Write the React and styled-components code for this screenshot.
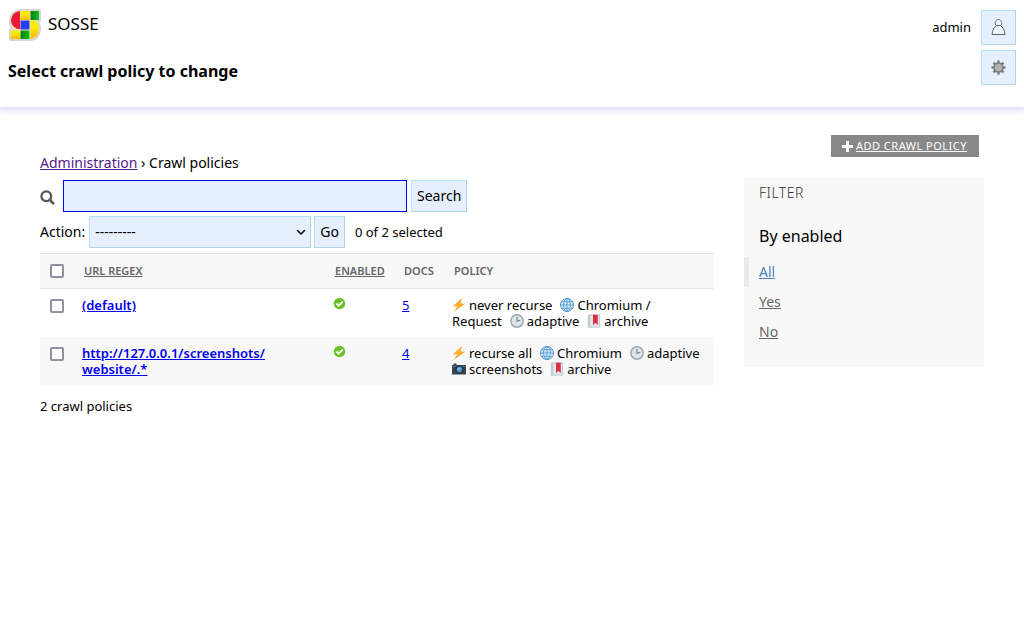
import React, { useState } from "react";
import styled, { createGlobalStyle } from "styled-components";

const GlobalStyle = createGlobalStyle`
  *, *::before, *::after { box-sizing: border-box; }
  body {
    margin: 0;
    background: #fff;
    color: #000;
    font: 14px/20px "Noto Sans", "Open Sans", sans-serif;
  }
  button, input, select { font: inherit; color: inherit; }
`;

const Header = styled.header`
  display: flex;
  justify-content: space-between;
  min-height: 107px;
  padding: 8px;
  box-shadow: 0 2px 6px 2px #dfe1f5;
`;
const Brand = styled.a`
  display: flex;
  align-items: center;
  gap: 6px;
  height: 32px;
  font-size: 17px;
  color: #000;
  text-decoration: none;
  svg { flex: none; margin-top: 2px; }
`;
const Title = styled.h1`
  margin: 19px 0 0;
  font-size: 16px;
  line-height: 24px;
  font-weight: 700;
`;
const UserArea = styled.div`
  display: flex;
  gap: 10px;
  padding-top: 2px;
  font-size: 13px;
  line-height: 34px;
`;
const IconStack = styled.div`
  display: flex;
  flex-direction: column;
  gap: 5px;
`;
const Button = styled.button`
  height: 32px;
  padding: 0 5px;
  border: 1px solid;
  border-color: #b4e3f8 #b1d4e8 #b1d4e8 #b4e3f8;
  border-radius: 0;
  background: #e6effe;
`;
const IconButton = styled(Button)`
  display: flex;
  align-items: center;
  justify-content: center;
  width: 35px;
  height: 35px;
`;

const Main = styled.main`
  display: grid;
  grid-template-columns: minmax(0, 1fr) 240px;
  gap: 30px;
  padding: 28px 40px;
`;
const Content = styled.section`padding-top: 18px;`;
const Breadcrumbs = styled.nav`
  margin-bottom: 7px;
  a { color: #551a8b; }
`;
const Toolbar = styled.form`
  display: flex;
  align-items: center;
  gap: ${(p) => (p.$last ? 3 : 4)}px;
  margin-bottom: ${(p) => (p.$last ? 5 : 4)}px;
`;
const ActionLabel = styled.label`padding-right: 1px;`;
const SearchLabel = styled.label`
  display: flex;
  width: 19px;
  padding-top: 3px;
`;
const SearchInput = styled.input`
  width: 344px;
  height: 32px;
  padding: 0 5px;
  border: 1px solid #0000f5;
  background: #e6effe;
  outline: none;
`;
const SelectWrap = styled.span`
  position: relative;
  display: flex;
  svg { position: absolute; right: 5px; top: 11px; pointer-events: none; }
`;
const Select = styled.select`
  appearance: none;
  width: 222px;
  height: 32px;
  padding: 0 20px 0 5px;
  border: 1px solid;
  border-color: #b4e3f8 #b1d4e8 #b1d4e8 #b4e3f8;
  border-radius: 0;
  background: #e6effe;
`;
const Count = styled.span`
  margin-left: 7px;
  font-size: 13px;
`;

const Table = styled.table`
  width: 100%;
  border-collapse: separate;
  border-spacing: 0;
  table-layout: fixed;
  font-size: 13px;
  line-height: 16px;
`;
const HeadCell = styled.th`
  width: ${(p) => p.$width || "auto"};
  height: 36px;
  padding: 0 10px;
  border: solid #e6e6e6;
  border-width: 1px 0;
  background: #f8f8f8;
  color: #666;
  font-size: 11px;
  font-weight: 600;
  text-align: left;
  text-transform: uppercase;
  a { color: inherit; }
`;
const Row = styled.tr`
  background: ${(p) => (p.$shaded ? "#f8f8f8" : "#fff")};
`;
const Cell = styled.td`
  height: 48px;
  padding: 8px;
  vertical-align: top;
  font-weight: ${(p) => (p.$strong ? 600 : 400)};
  a { color: #0000ee; }
  > svg { display: block; }
`;
const CheckCell = styled(Cell)`padding: 10px;`;
const Checkbox = styled.input`
  appearance: none;
  display: block;
  width: 14px;
  height: 14px;
  margin: 0;
  border: 2px solid #8f8f9d;
  border-radius: 2px;
  background: #fff;
  &:checked { background: #0060df; }
`;
const PolicyLine = styled.span`
  display: flex;
  gap: 8px;
  white-space: nowrap;
`;
const PolicyItem = styled.span`
  display: flex;
  align-items: center;
  gap: 3px;
`;
const Summary = styled.p`
  margin: 11px 0;
  font-size: 13px;
`;

const Side = styled.aside`
  display: flex;
  flex-direction: column;
  gap: 21px;
`;
const AddLink = styled.a`
  display: flex;
  align-items: center;
  align-self: flex-end;
  gap: 3px;
  height: 22px;
  margin-right: 5px;
  padding: 0 12px 0 11px;
  background: #888;
  color: #fff;
  font-size: 11px;
  letter-spacing: 0.5px;
  text-transform: uppercase;
  white-space: nowrap;
`;
const Filter = styled.nav`
  padding: 5px 15px 20px;
  background: #f8f8f8;
`;
const FilterTitle = styled.h2`
  margin: 0 0 22px;
  color: #333;
  font-size: 14px;
  font-weight: 300;
  letter-spacing: 0.5px;
  text-transform: uppercase;
`;
const FilterGroup = styled.h3`
  margin: 0 0 10px;
  font-size: 16px;
  line-height: 22px;
  font-weight: 400;
`;
const FilterList = styled.ul`
  margin: 0 -15px;
  padding: 0;
  list-style: none;
`;
const FilterItem = styled.li`
  height: 30px;
  padding-left: 10px;
  border-left: 5px solid ${(p) => (p.$selected ? "#eaeaea" : "transparent")};
  line-height: 30px;
  a { color: ${(p) => (p.$selected ? "#4f7fbd" : "#666")}; }
`;

const Logo = () => (
  <svg width="34" height="34" viewBox="0 0 34 34" aria-hidden="true">
    <defs>
      <linearGradient id="ly" x2="0" y2="1"><stop offset=".4" stopColor="#f8ea00" /><stop offset="1" stopColor="#ffb000" /></linearGradient>
      <linearGradient id="lg" x2="1" y2="0"><stop stopColor="#0a7a16" /><stop offset="1" stopColor="#0bc313" /></linearGradient>
    </defs>
    <path d="M12 3H31V12H27Q31 15 31 21 30 31 22 31H3V22H7Q3 19 3 13 4 4 12 3Z" fill="#d5d5d5" stroke="#d5d5d5" strokeWidth="4" strokeLinejoin="round" />
    <path d="M12 3H31V12H27Q31 15 31 21 30 31 22 31H3V22H7Q3 19 3 13 4 4 12 3Z" fill="#fbe9b4" />
    <path d="M12 3V21H9Q3 18 3 12 4 4 12 3Z" fill="#e91c35" />
    <path d="M12.500 3h9v9h-9z" fill="url(#ly)" />
    <path d="M22.500 3h8.500v9h-8.500z" fill="url(#lg)" />
    <path d="M12.500 12.500h9v9h-9z" fill="#263cf5" />
    <path d="M22.500 12.500h4.500Q31 16 31 21 30 30 22.500 31Z" fill="url(#ly)" />
    <path d="M3 22.500h9v8.500H3z" fill="url(#ly)" />
    <path d="M12.500 22.500h9v8.500h-9z" fill="url(#lg)" />
  </svg>
);
const UserIcon = () => (
  <svg width="15" height="17" viewBox="0 0 15 17" fill="#f2f6fd" stroke="#59636d" aria-hidden="true">
    <path d="M5.500 6.500C3.900 5.500 3.900 3.700 4.700 2.500 6-.1 9-.1 10.300 2.500c.8 1.200.8 3-.8 4 2.500 1.500 4 4.500 4.500 9h-13c.5-4.500 2-7.500 4.500-9Z" />
    <path d="M5.500 6.500h4" />
  </svg>
);
const GearIcon = () => (
  <svg width="15" height="15" viewBox="0 0 16 16" stroke="#7c7c7c" aria-hidden="true">
    {[0, 45, 90, 135].map((a) => (
      <path key={a} d="M8 .5v15" strokeWidth="2.600" transform={`rotate(${a} 8 8)`} />
    ))}
    <circle cx="8" cy="8" r="4.800" fill="#b2b2b2" strokeWidth="1.600" />
  </svg>
);
const SearchIcon = () => (
  <svg width="15" height="15" viewBox="0 0 15 15" fill="none" stroke="#555" aria-hidden="true">
    <circle cx="6.300" cy="6.300" r="4.900" strokeWidth="2.200" />
    <path d="m9.800 9.800 3.400 3.600" strokeWidth="2.600" strokeLinecap="round" />
  </svg>
);
const Chevron = () => (
  <svg width="10" height="10" viewBox="0 0 10 10" fill="none" stroke="#111" strokeWidth="1.600" strokeLinecap="round" strokeLinejoin="round" aria-hidden="true">
    <path d="m1.500 3.500 3.500 3.500 3.500-3.500" />
  </svg>
);
const YesIcon = () => (
  <svg width="13" height="13" viewBox="0 0 13 13" role="img" aria-label="True">
    <circle cx="6.500" cy="6.500" r="5.700" fill="#70bf2b" />
    <path d="m3.500 6.500 2.200 2.200 4-4" fill="none" stroke="#fff" strokeWidth="1.800" />
  </svg>
);
const PlusIcon = () => (
  <svg width="11" height="11" viewBox="0 0 11 11" stroke="#fff" strokeWidth="3" aria-hidden="true">
    <path d="M5.500 0v11M0 5.500h11" />
  </svg>
);

const glyphs = {
  bolt: <path d="M10 0 .8 8.300l4.500.2L1.800 14 13.300 5.700l-4.700-.2Z" fill="#ffac33" />,
  globe: (
    <g fill="none" stroke="#4d94cb">
      <circle cx="7" cy="7" r="6.500" fill="#d3eafa" strokeWidth="1" />
      <path d="M7 .5v13M.5 7h13M2 3.700h10M2 10.300h10" strokeWidth=".8" />
      <ellipse cx="7" cy="7" rx="3.400" ry="6.500" strokeWidth=".8" />
    </g>
  ),
  clock: (
    <g fill="none">
      <circle cx="7" cy="7" r="6.200" fill="#dde4e9" stroke="#9aaab4" strokeWidth="1.500" />
      <path d="M7 3v4.300l3.300-1" stroke="#75838d" strokeWidth="1.100" />
    </g>
  ),
  book: (
    <g>
      <path d="M.8 1.500 2.500.3h10.700v12L12 13.700H.8Z" fill="#c3cdd4" />
      <path d="M3.500 1.500h8.500v11H3.500Z" fill="#e6ebee" />
      <path d="M6 .8h4.800v10.500L8.400 8.700 6 11.300Z" fill="#dd2e44" />
    </g>
  ),
  camera: (
    <g>
      <path d="M1.500 1.500h3V3H14v9.500H0V3h1.500Z" fill="#38434b" />
      <path d="M0 4.500h14" stroke="#65727b" />
      <circle cx="7.500" cy="7.500" r="4" fill="#1f2a31" />
      <circle cx="7.500" cy="7.500" r="2.900" fill="#4390cb" />
      <circle cx="7" cy="7" r="1.300" fill="#80bce8" />
    </g>
  ),
};
const PolicyIcon = ({ name }) => (
  <svg width="14" height="14" viewBox="0 0 14 14" aria-hidden="true">{glyphs[name]}</svg>
);

const policies = [
  {
    regex: "(default)",
    docs: 5,
    lines: [
      [["bolt", "never recurse"], ["globe", "Chromium /"]],
      [[null, "Request"], ["clock", "adaptive"], ["book", "archive"]],
    ],
  },
  {
    regex: <>http://127.0.0.1/screenshots/<wbr />website/.*</>,
    docs: 4,
    lines: [
      [["bolt", "recurse all"], ["globe", "Chromium"], ["clock", "adaptive"]],
      [["camera", "screenshots"], ["book", "archive"]],
    ],
  },
];

export default function App() {
  const [picked, setPicked] = useState([false, false]);
  const count = picked.filter(Boolean).length;
  const toggle = (i) => setPicked(picked.map((v, j) => (i === j ? !v : v)));
  const stop = (e) => e.preventDefault();

  return (
    <>
      <GlobalStyle />
      <Header>
        <div>
          <Brand href="#"><Logo />SOSSE</Brand>
          <Title>Select crawl policy to change</Title>
        </div>
        <UserArea>
          <span>admin</span>
          <IconStack>
            <IconButton type="button" aria-label="User menu"><UserIcon /></IconButton>
            <IconButton type="button" aria-label="Settings"><GearIcon /></IconButton>
          </IconStack>
        </UserArea>
      </Header>
      <Main>
        <Content>
          <Breadcrumbs><a href="#">Administration</a> › Crawl policies</Breadcrumbs>
          <Toolbar role="search" onSubmit={stop}>
            <SearchLabel htmlFor="searchbar" aria-label="Search"><SearchIcon /></SearchLabel>
            <SearchInput id="searchbar" type="text" />
            <Button type="submit">Search</Button>
          </Toolbar>
          <Toolbar $last onSubmit={stop}>
            <ActionLabel htmlFor="action">Action:</ActionLabel>
            <SelectWrap>
              <Select id="action"><option>---------</option></Select>
              <Chevron />
            </SelectWrap>
            <Button type="submit">Go</Button>
            <Count>{count} of 2 selected</Count>
          </Toolbar>
          <Table>
            <thead>
              <tr>
                <HeadCell $width="34px">
                  <Checkbox type="checkbox" aria-label="Select all" checked={count === 2} onChange={() => setPicked(picked.map(() => count !== 2))} />
                </HeadCell>
                <HeadCell $width="251px"><a href="#">URL Regex</a></HeadCell>
                <HeadCell $width="69px"><a href="#">Enabled</a></HeadCell>
                <HeadCell $width="50px">Docs</HeadCell>
                <HeadCell>Policy</HeadCell>
              </tr>
            </thead>
            <tbody>
              {policies.map((p, i) => (
                <Row key={i} $shaded={i % 2 === 1}>
                  <CheckCell><Checkbox type="checkbox" aria-label="Select row" checked={picked[i]} onChange={() => toggle(i)} /></CheckCell>
                  <Cell $strong><a href="#">{p.regex}</a></Cell>
                  <Cell><YesIcon /></Cell>
                  <Cell><a href="#">{p.docs}</a></Cell>
                  <Cell>
                    {p.lines.map((line, j) => (
                      <PolicyLine key={j}>
                        {line.map(([icon, text]) => (
                          <PolicyItem key={text}>{icon && <PolicyIcon name={icon} />}{text}</PolicyItem>
                        ))}
                      </PolicyLine>
                    ))}
                  </Cell>
                </Row>
              ))}
            </tbody>
          </Table>
          <Summary>2 crawl policies</Summary>
        </Content>
        <Side>
          <AddLink href="#"><PlusIcon />Add crawl policy</AddLink>
          <Filter aria-label="Filter">
            <FilterTitle>Filter</FilterTitle>
            <FilterGroup>By enabled</FilterGroup>
            <FilterList>
              <FilterItem $selected><a href="#">All</a></FilterItem>
              <FilterItem><a href="#">Yes</a></FilterItem>
              <FilterItem><a href="#">No</a></FilterItem>
            </FilterList>
          </Filter>
        </Side>
      </Main>
    </>
  );
}
